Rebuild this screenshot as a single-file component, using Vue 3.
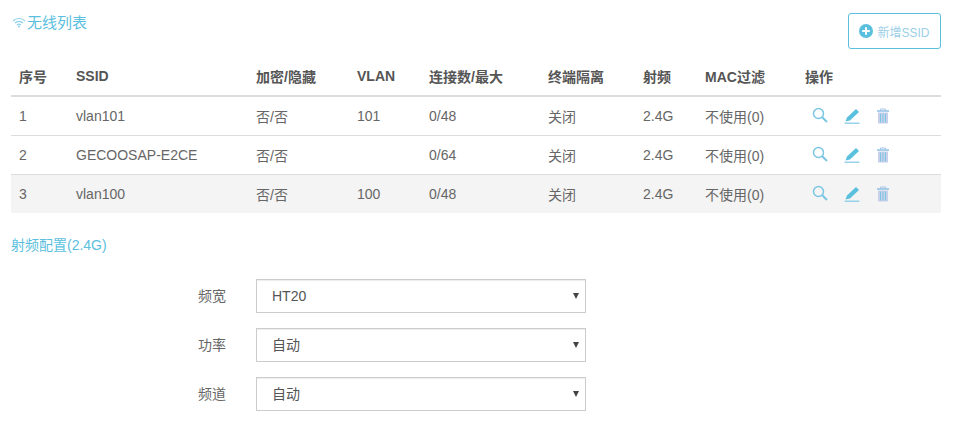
<script setup>
const columns = [
  { label: '序号', cls: 'c1' },
  { label: 'SSID', cls: 'c2' },
  { label: '加密/隐藏', cls: 'c3' },
  { label: 'VLAN', cls: 'c4' },
  { label: '连接数/最大', cls: 'c5' },
  { label: '终端隔离', cls: 'c6' },
  { label: '射频', cls: 'c7' },
  { label: 'MAC过滤', cls: 'c8' },
  { label: '操作', cls: 'c9' }
]
const rows = [
  { id: 1, ssid: 'vlan101', enc: '否/否', vlan: '101', conn: '0/48' },
  { id: 2, ssid: 'GECOOSAP-E2CE', enc: '否/否', vlan: '', conn: '0/64' },
  { id: 3, ssid: 'vlan100', enc: '否/否', vlan: '100', conn: '0/48' }
]
const fields = [
  { label: '频宽', value: 'HT20' },
  { label: '功率', value: '自动' },
  { label: '频道', value: '自动' }
]
</script>

<template>
  <div class="page">
    <div class="top">
      <div class="title">
        <svg class="wifi" viewBox="0 0 14 11" width="14" height="11">
          <path d="M1 4 A8.5 8.5 0 0 1 13 4" fill="none" stroke="#8fd0e8" stroke-width="1.2" />
          <path d="M3 6 A5.6 5.6 0 0 1 11 6" fill="none" stroke="#8fd0e8" stroke-width="1.2" />
          <path d="M5 8 A2.8 2.8 0 0 1 9 8" fill="none" stroke="#8fd0e8" stroke-width="1.2" />
          <circle cx="7" cy="9.6" r="1" fill="#8fd0e8" />
        </svg><span>无线列表</span>
      </div>
      <button class="add" type="button">
        <svg viewBox="0 0 14 14" width="14" height="14">
          <circle cx="7" cy="7" r="7" fill="#5bc0de" />
          <path d="M7 3.2V10.8M3.2 7H10.8" stroke="#fff" stroke-width="2" />
        </svg>
        <span>新增SSID</span>
      </button>
    </div>

    <table class="list">
      <thead>
        <tr>
          <th v-for="col in columns" :key="col.label" :class="col.cls">{{ col.label }}</th>
        </tr>
      </thead>
      <tbody>
        <tr v-for="row in rows" :key="row.id">
          <td>{{ row.id }}</td>
          <td>{{ row.ssid }}</td>
          <td>{{ row.enc }}</td>
          <td>{{ row.vlan }}</td>
          <td>{{ row.conn }}</td>
          <td>关闭</td>
          <td>2.4G</td>
          <td>不使用(0)</td>
          <td>
            <div class="ops">
              <svg class="search" viewBox="0 0 16 16" width="16" height="16">
                <circle cx="6.5" cy="6.5" r="5" fill="none" stroke="#7cc6e4" stroke-width="1.5" />
                <path d="M10.2 10.2L15 15" stroke="#7cc6e4" stroke-width="2" />
              </svg>
              <svg viewBox="0 0 16 16" width="16" height="16">
                <path d="M12 1L15 4L6 12.5L1.5 13.5L3 9.5Z" fill="#5bc0de" />
                <path d="M0.5 15.2H15.5" stroke="#8fd0e8" stroke-width="1.4" />
              </svg>
              <svg viewBox="0 0 14 16" width="14" height="16">
                <path d="M4.5 2.5V1H9.5V2.5" fill="none" stroke="#a9c4e6" />
                <path d="M1 3H13" stroke="#8fc0e6" stroke-width="1.5" />
                <path d="M2 4.5H12V15.5H2Z" fill="#c9d0ea" />
                <path d="M4.5 5.5V14.5M7 5.5V14.5M9.5 5.5V14.5" stroke="#7cc6e4" stroke-width="1" />
              </svg>
            </div>
          </td>
        </tr>
      </tbody>
    </table>

    <div class="title second">射频配置(2.4G)</div>

    <form class="form">
      <div v-for="field in fields" :key="field.label" class="field">
        <label class="label">{{ field.label }}</label>
        <div class="select-wrap">
          <select class="select">
            <option>{{ field.value }}</option>
          </select>
          <span class="arrow"></span>
        </div>
      </div>
    </form>
  </div>
</template>

<style scoped>
.page {
  width: 930px;
  margin-left: 11px;
  padding-top: 13px;
  font-family: "Liberation Sans", "Noto Sans CJK SC", sans-serif;
  font-size: 14px;
  color: #666;
}
.top {
  display: flex;
  justify-content: space-between;
  align-items: flex-start;
  height: 36px;
}
.title {
  font-size: 15px;
  color: #5bc0de;
  line-height: 20px;
}
.wifi {
  margin-left: 1px;
  margin-right: 1px;
}
.add {
  width: 93px;
  height: 36px;
  display: flex;
  align-items: center;
  justify-content: center;
  gap: 4px;
  padding: 0;
  background: #fff;
  border: 1px solid #5bc0de;
  border-radius: 3px;
  font-family: inherit;
  font-size: 12px;
  color: #9ccfe6;
}
.list {
  width: 930px;
  margin-top: 11px;
  border-collapse: collapse;
  table-layout: fixed;
}
.list th {
  box-sizing: border-box;
  height: 36px;
  padding: 0 8px 4px;
  text-align: left;
  font-size: 14px;
  font-weight: bold;
  color: #555;
  border-bottom: 2px solid #ddd;
}
.list td {
  height: 39px;
  padding: 0 8px;
  box-sizing: border-box;
  border-bottom: 1px solid #ddd;
}
.list tbody tr:last-child td {
  background: #f4f4f4;
  border-bottom: 0;
  height: 39px;
}
.c1 { width: 57px; }
.c2 { width: 180px; }
.c3 { width: 101px; }
.c4 { width: 72px; }
.c5 { width: 119px; }
.c6 { width: 95px; }
.c7 { width: 62px; }
.c8 { width: 100px; }
.c9 { width: 144px; }
.ops {
  display: flex;
  align-items: center;
  gap: 16px;
  padding-left: 7px;
}
.search {
  margin-bottom: 2px;
}
.second {
  margin-top: 22px;
  height: 20px;
  font-size: 14px;
}
.form {
  margin-top: 24px;
  display: flex;
  flex-direction: column;
  gap: 15px;
}
.field {
  display: flex;
  align-items: center;
}
.label {
  width: 245px;
  text-align: right;
  padding: 0 30px 2px 0;
  box-sizing: border-box;
}
.select-wrap {
  position: relative;
  width: 330px;
  height: 34px;
}
.select {
  display: block;
  width: 100%;
  height: 100%;
  padding: 0 24px 0 15px;
  appearance: none;
  border: 1px solid #ccc;
  border-radius: 0;
  background: #fff;
  box-shadow: inset 0 1px 1px rgba(0, 0, 0, 0.075);
  font-family: inherit;
  font-size: 14px;
  color: #555;
}
.arrow {
  position: absolute;
  top: 14px;
  right: 7px;
  border-left: 3px solid transparent;
  border-right: 3px solid transparent;
  border-top: 6px solid #444;
}
</style>
